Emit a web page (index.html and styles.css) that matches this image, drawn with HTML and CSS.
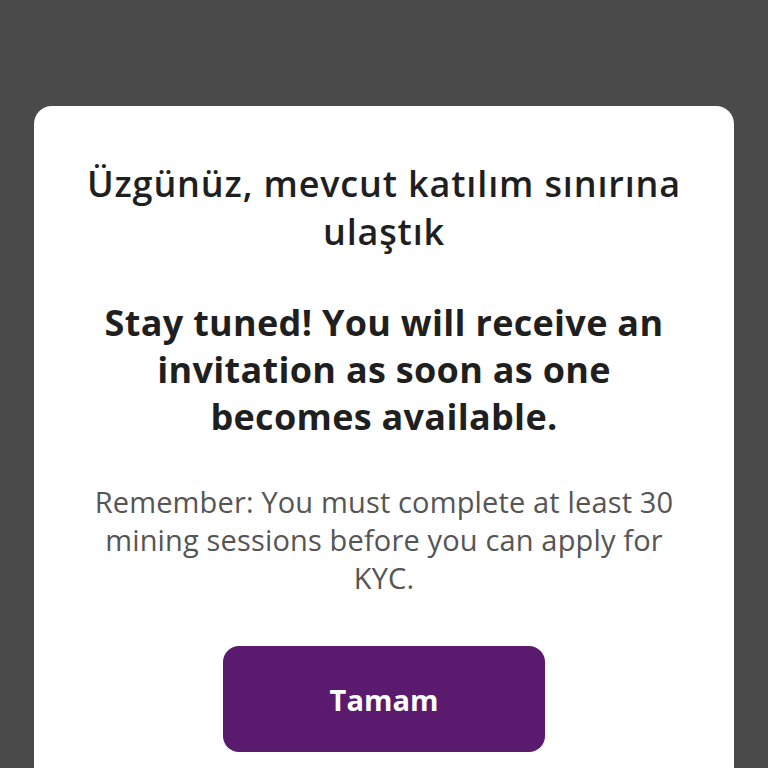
FILE: index.html
```html
<!DOCTYPE html>
<html lang="tr">
<head>
<meta charset="utf-8">
<link rel="stylesheet" href="styles.css">
</head>
<body>
<div class="screen">
  <div class="card">
    <h1 class="title">Üzgünüz, mevcut katılım sınırına ulaştık</h1>
    <h2 class="subtitle">Stay tuned! You will receive an invitation as soon as one becomes available.</h2>
    <p class="note">Remember: You must complete at least 30 mining sessions before you can apply for KYC.</p>
    <button class="btn">Tamam</button>
  </div>
</div>
</body>
</html>
```
FILE: styles.css
```css
html, body {
  margin: 0;
  padding: 0;
  background: #4a4a4a;
  height: 768px;
  overflow: hidden;
}
.screen {
  padding: 106px 34px 0;
  font-family: "Open Sans", "Noto Sans", sans-serif;
}
.card {
  background: #ffffff;
  border-radius: 18px 18px 0 0;
  padding: 54px 50px 40px;
  display: flex;
  flex-direction: column;
  align-items: center;
  text-align: center;
  height: 700px;
  box-sizing: border-box;
}
.title {
  margin: 0;
  font-size: 36px;
  font-weight: 600;
  letter-spacing: 0.85px;
  line-height: 48px;
  color: #1f1f1f;
}
.subtitle {
  margin: 43px 0 0;
  font-size: 36px;
  font-weight: 700;
  letter-spacing: 0.3px;
  line-height: 47px;
  color: #1f1f1f;
}
.note {
  margin: 43px 0 0;
  font-size: 29px;
  font-weight: 400;
  letter-spacing: 0.15px;
  line-height: 38px;
  color: #555555;
}
.btn {
  margin-top: 49px;
  flex-shrink: 0;
  width: 322px;
  height: 106px;
  border: none;
  border-radius: 16px;
  background: #5a1a6e;
  color: #ffffff;
  font-family: inherit;
  font-size: 29px;
  font-weight: 700;
}
```
